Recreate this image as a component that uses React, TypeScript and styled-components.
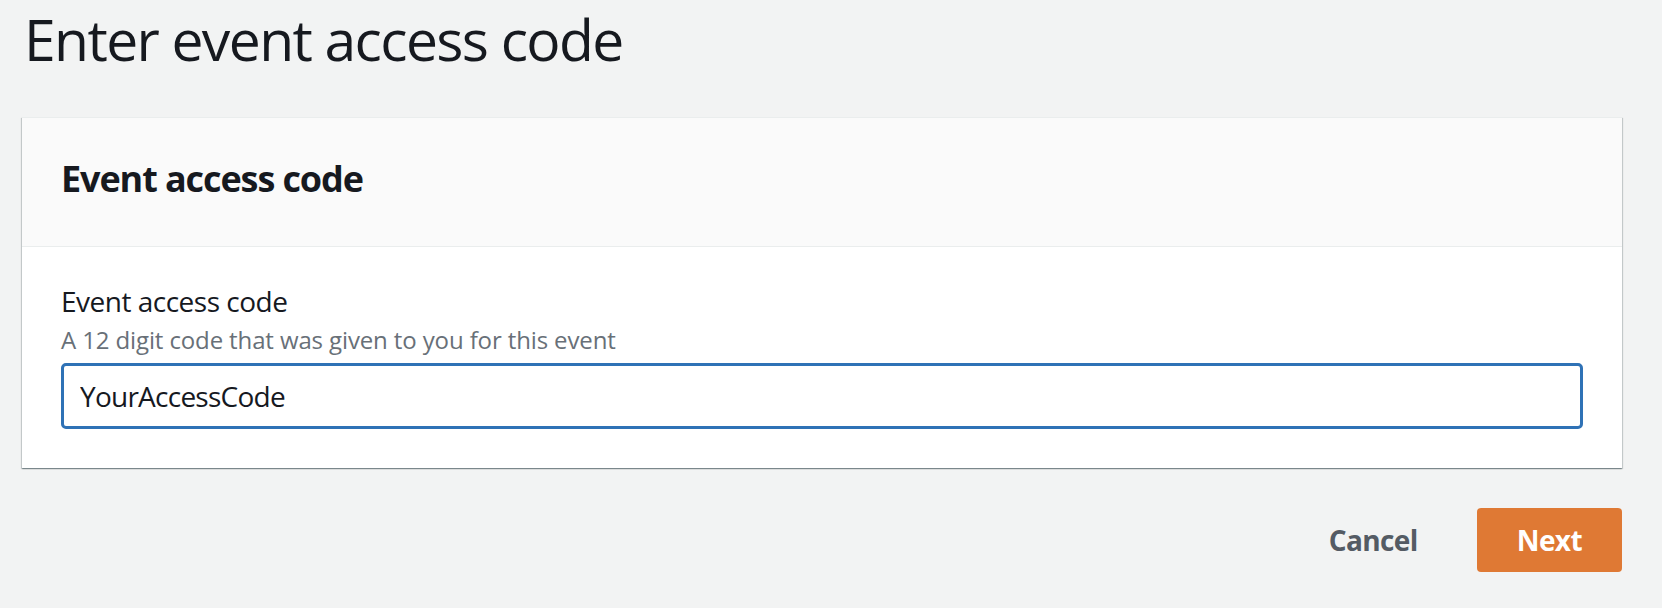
import styled, { createGlobalStyle } from 'styled-components';

const GlobalStyle = createGlobalStyle`
  html, body {
    margin: 0;
    padding: 0;
    background: #f2f3f3;
  }
  body {
    font-family: "Open Sans", "Noto Sans", sans-serif;
    color: #16191f;
  }
`;

const Page = styled.div`
  padding: 5px 40px 36px 22px;
`;

const Title = styled.h1`
  margin: 0 0 44px 2px;
  font-size: 57px;
  line-height: 68px;
  font-weight: 400;
  letter-spacing: -1.6px;
  color: #16191f;
`;

const Card = styled.section`
  background: #fff;
  border-top: 1px solid #eaeded;
  box-shadow: 0 1px 1px 0 rgba(0, 28, 36, 0.3), 1px 1px 1px 0 rgba(0, 28, 36, 0.15),
    -1px 1px 1px 0 rgba(0, 28, 36, 0.15);
`;

const CardHeader = styled.header`
  background: #fafafa;
  border-bottom: 1px solid #eaeded;
  padding: 39px 39px 45px;
`;

const CardTitle = styled.h2`
  margin: 0;
  font-size: 36px;
  line-height: 44px;
  font-weight: 700;
  letter-spacing: -1.1px;
`;

const CardBody = styled.div`
  padding: 36px 39px 39px;
`;

const Label = styled.label`
  display: block;
  font-size: 28px;
  line-height: 36px;
  letter-spacing: -0.5px;
  color: #16191f;
`;

const Hint = styled.div`
  margin-top: 6px;
  font-size: 24px;
  line-height: 30px;
  letter-spacing: -0.12px;
  color: #687078;
`;

const Input = styled.input`
  display: block;
  box-sizing: border-box;
  width: 100%;
  height: 66px;
  margin-top: 8px;
  padding: 0 16px;
  border: 3px solid #2f72b6;
  border-radius: 5px;
  font-family: inherit;
  font-size: 28px;
  letter-spacing: -0.75px;
  color: #16191f;
  background: #fff;
  outline: none;
`;

const Actions = styled.div`
  display: flex;
  justify-content: flex-end;
  align-items: center;
  gap: 59px;
  margin-top: 40px;
`;

const Button = styled.button<{ $primary?: boolean }>`
  height: 64px;
  padding: 0 ${({ $primary }) => ($primary ? '40px' : '0')};
  border: none;
  border-radius: 4px;
  font-family: inherit;
  font-size: 28px;
  font-weight: 700;
  letter-spacing: -0.6px;
  cursor: pointer;
  background: ${({ $primary }) => ($primary ? '#df7934' : 'transparent')};
  color: ${({ $primary }) => ($primary ? '#fff' : '#545b64')};
`;

export default function App() {
  return (
    <>
      <GlobalStyle />
      <Page>
        <Title>Enter event access code</Title>
        <Card>
          <CardHeader>
            <CardTitle>Event access code</CardTitle>
          </CardHeader>
          <CardBody>
            <Label htmlFor="code">Event access code</Label>
            <Hint>A 12 digit code that was given to you for this event</Hint>
            <Input id="code" defaultValue="YourAccessCode" />
          </CardBody>
        </Card>
        <Actions>
          <Button>Cancel</Button>
          <Button $primary>Next</Button>
        </Actions>
      </Page>
    </>
  );
}
